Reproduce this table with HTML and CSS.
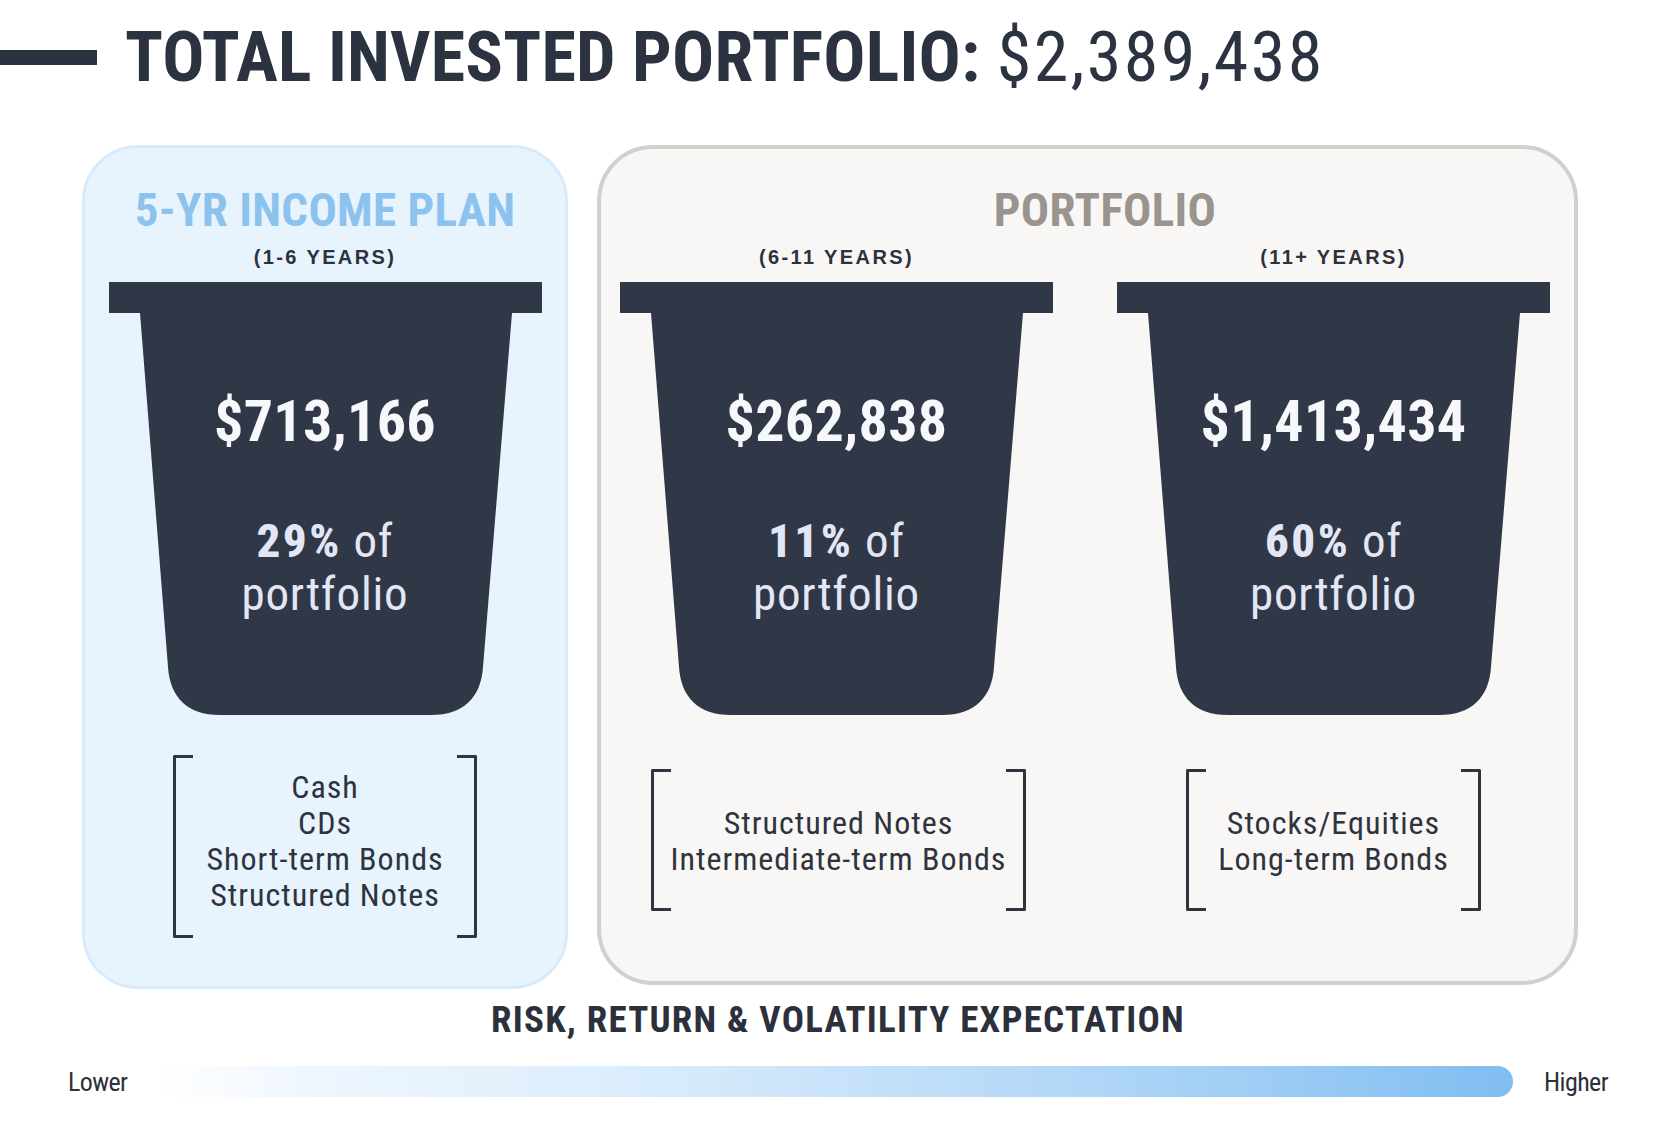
FILE: index.html
```html
<!DOCTYPE html>
<html lang="en">
<head>
<meta charset="utf-8">
<title>Total Invested Portfolio</title>
<link rel="stylesheet" href="styles.css">
</head>
<body>
<div class="page">
  <header class="header">
    <span class="header__dash"></span>
    <h1 class="header__title">TOTAL INVESTED PORTFOLIO: <span class="header__amount">$2,389,438</span></h1>
  </header>

  <main class="panels">
    <section class="panel panel--income">
      <h2 class="panel__title panel__title--income">5-YR INCOME PLAN</h2>
      <div class="column">
        <div class="column__years">(1-6 YEARS)</div>
        <div class="bucket">
          <svg class="bucket__shape" viewBox="0 0 433 433" aria-hidden="true">
            <rect x="0" y="0" width="433" height="31"/>
            <path d="M31 31 H403 L374 385 C372 415 355 433 322 433 H111 C78 433 61 415 59 385 Z"/>
          </svg>
          <div class="bucket__content">
            <div class="bucket__amount">$713,166</div>
            <div class="bucket__pct"><b>29%</b> of<br>portfolio</div>
          </div>
        </div>
        <div class="bracket bracket--a">
          <span class="bracket__edge bracket__edge--left"></span>
          <div class="bracket__text bracket__text--tall">
            <div>Cash</div>
            <div>CDs</div>
            <div>Short-term Bonds</div>
            <div>Structured Notes</div>
          </div>
          <span class="bracket__edge bracket__edge--right"></span>
        </div>
      </div>
    </section>

    <section class="panel panel--portfolio">
      <h2 class="panel__title panel__title--portfolio">PORTFOLIO</h2>
      <div class="columns">
        <div class="column">
          <div class="column__years">(6-11 YEARS)</div>
          <div class="bucket">
            <svg class="bucket__shape" viewBox="0 0 433 433" aria-hidden="true">
              <rect x="0" y="0" width="433" height="31"/>
              <path d="M31 31 H403 L374 385 C372 415 355 433 322 433 H111 C78 433 61 415 59 385 Z"/>
            </svg>
            <div class="bucket__content">
              <div class="bucket__amount">$262,838</div>
              <div class="bucket__pct"><b>11%</b> of<br>portfolio</div>
            </div>
          </div>
          <div class="bracket bracket--b bracket--short">
            <span class="bracket__edge bracket__edge--left"></span>
            <div class="bracket__text">
              <div>Structured Notes</div>
              <div>Intermediate-term Bonds</div>
            </div>
            <span class="bracket__edge bracket__edge--right"></span>
          </div>
        </div>

        <div class="column">
          <div class="column__years">(11+ YEARS)</div>
          <div class="bucket">
            <svg class="bucket__shape" viewBox="0 0 433 433" aria-hidden="true">
              <rect x="0" y="0" width="433" height="31"/>
              <path d="M31 31 H403 L374 385 C372 415 355 433 322 433 H111 C78 433 61 415 59 385 Z"/>
            </svg>
            <div class="bucket__content">
              <div class="bucket__amount">$1,413,434</div>
              <div class="bucket__pct"><b>60%</b> of<br>portfolio</div>
            </div>
          </div>
          <div class="bracket bracket--c bracket--short">
            <span class="bracket__edge bracket__edge--left"></span>
            <div class="bracket__text">
              <div>Stocks/Equities</div>
              <div>Long-term Bonds</div>
            </div>
            <span class="bracket__edge bracket__edge--right"></span>
          </div>
        </div>
      </div>
    </section>
  </main>

  <footer class="scale">
    <h3 class="scale__title">RISK, RETURN &amp; VOLATILITY EXPECTATION</h3>
    <div class="scale__row">
      <span class="scale__label">Lower</span>
      <span class="scale__bar"></span>
      <span class="scale__label">Higher</span>
    </div>
  </footer>
</div>
</body>
</html>
```

FILE: styles.css
```css
* {
  box-sizing: border-box;
}

html, body {
  margin: 0;
  padding: 0;
  background: #ffffff;
}

body {
  font-family: "Roboto", "DejaVu Sans Condensed", sans-serif;
  font-stretch: 75%;
  color: #2c323f;
}

.page {
  width: 1664px;
  height: 1144px;
  overflow: hidden;
}

/* ---------- Header ---------- */
.header {
  display: flex;
  align-items: center;
  gap: 28px;
  padding-top: 18px;
}

.header__dash {
  display: block;
  width: 97px;
  height: 15px;
  background: #2b3240;
  flex: none;
}

.header__title {
  margin: 0;
  font-size: 70px;
  line-height: 78px;
  font-weight: 700;
  color: #2b3240;
  white-space: nowrap;
  letter-spacing: 0.2px;
}

.header__amount {
  font-weight: 400;
  letter-spacing: 2.4px;
}

/* ---------- Panels ---------- */
.panels {
  display: flex;
  align-items: flex-start;
  gap: 29px;
  margin-top: 49px;
  padding-left: 82px;
}

.panel {
  border-radius: 56px;
  display: flex;
  flex-direction: column;
}

.panel--income {
  width: 486px;
  height: 844px;
  padding-top: 36px;
  background: #e7f3fd;
  border: 3px solid #d9ebfa;
  align-items: center;
}

.panel--portfolio {
  width: 981px;
  height: 840px;
  padding-top: 35px;
  background: #f8f7f5;
  border: 4px solid #d2d0cd;
}

.panel__title {
  margin: 0;
  font-size: 47px;
  line-height: 52px;
  font-weight: 700;
  letter-spacing: 0.3px;
  text-align: center;
}

.panel__title--income {
  color: #8cc3ee;
}

.panel__title--portfolio {
  color: #9a948e;
  padding-left: 35px;
}

.columns {
  display: flex;
  gap: 64px;
  padding-left: 19px;
}

.column {
  width: 433px;
  display: flex;
  flex-direction: column;
  align-items: center;
}

.column__years {
  margin-top: 9px;
  font-family: "Liberation Sans", Arial, sans-serif;
  font-stretch: 100%;
  font-size: 20px;
  line-height: 24px;
  font-weight: 700;
  letter-spacing: 2.4px;
  color: #2d313b;
}

/* ---------- Bucket ---------- */
.bucket {
  position: relative;
  width: 433px;
  height: 433px;
  margin-top: 13px;
}

.bucket__shape {
  position: absolute;
  left: 0;
  top: 0;
  width: 433px;
  height: 433px;
  fill: #303746;
}

.bucket__content {
  position: relative;
  padding-top: 107px;
  text-align: center;
}

.bucket__amount {
  font-size: 58px;
  line-height: 64px;
  font-weight: 700;
  letter-spacing: 0.3px;
  color: #f7f8fc;
}

.bucket__pct {
  margin-top: 61px;
  font-size: 47px;
  line-height: 53px;
  font-weight: 400;
  letter-spacing: 0.8px;
  color: #e2e6f5;
}

.bucket__pct b {
  font-weight: 800;
  letter-spacing: 2.5px;
}

/* ---------- Brackets ---------- */
.bracket {
  display: flex;
  align-items: stretch;
  margin-top: 40px;
}

.bracket--short {
  margin-top: 54px;
}

.bracket--a { width: 304px; }
.bracket--b { width: 372px; }
.bracket--c { width: 295px; }

.bracket__edge {
  flex: none;
  width: 20px;
  border-top: 3px solid #2f343f;
  border-bottom: 3px solid #2f343f;
}

.bracket__edge--left {
  border-left: 3px solid #2f343f;
  border-radius: 2px 0 0 2px;
}

.bracket__edge--right {
  border-right: 3px solid #2f343f;
  border-radius: 0 2px 2px 0;
}

.bracket__text {
  flex: 1;
  text-align: center;
  font-size: 32px;
  line-height: 36px;
  font-weight: 400;
  letter-spacing: 1px;
  color: #2e333d;
  padding: 36px 0 34px;
  white-space: nowrap;
}

.bracket__text--tall {
  padding: 14px 0 25px;
}

/* ---------- Scale ---------- */
.scale__title {
  margin: 11px 0 0;
  padding-left: 12px;
  text-align: center;
  font-size: 37px;
  line-height: 40px;
  font-weight: 700;
  letter-spacing: 1.2px;
  color: #2b303c;
}

.scale__row {
  display: flex;
  align-items: center;
  margin-top: 26px;
  padding: 0 56px 0 68px;
}

.scale__label {
  font-size: 26px;
  line-height: 30px;
  font-weight: 400;
  letter-spacing: -0.6px;
  color: #2c3039;
}

.scale__bar {
  flex: 1;
  height: 31px;
  margin: 0 31px 0 27px;
  border-radius: 16px;
  background: linear-gradient(to right, #ffffff 0%, #eef6fe 12%, #dbedfc 35%, #bcdcf8 60%, #a0cef5 80%, #80bdf1 100%);
}
```
